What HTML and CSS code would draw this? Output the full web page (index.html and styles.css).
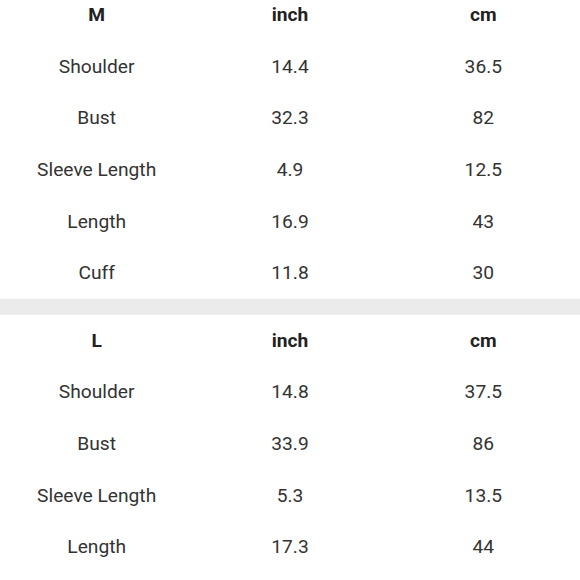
FILE: index.html
```html
<!DOCTYPE html>
<html>
<head>
<meta charset="utf-8">
<link rel="stylesheet" href="styles.css">
</head>
<body>
<div class="page">
  <table class="size-table">
    <tr class="head"><td>M</td><td>inch</td><td>cm</td></tr>
    <tr><td>Shoulder</td><td>14.4</td><td>36.5</td></tr>
    <tr><td>Bust</td><td>32.3</td><td>82</td></tr>
    <tr><td>Sleeve Length</td><td>4.9</td><td>12.5</td></tr>
    <tr><td>Length</td><td>16.9</td><td>43</td></tr>
    <tr><td>Cuff</td><td>11.8</td><td>30</td></tr>
  </table>
  <div class="divider"></div>
  <table class="size-table">
    <tr class="head"><td>L</td><td>inch</td><td>cm</td></tr>
    <tr><td>Shoulder</td><td>14.8</td><td>37.5</td></tr>
    <tr><td>Bust</td><td>33.9</td><td>86</td></tr>
    <tr><td>Sleeve Length</td><td>5.3</td><td>13.5</td></tr>
    <tr><td>Length</td><td>17.3</td><td>44</td></tr>
  </table>
</div>
</body>
</html>
```
FILE: styles.css
```css
html, body {
  margin: 0;
  padding: 0;
  background: #fff;
  overflow: hidden;
}
.page {
  width: 580px;
  margin-top: -10.6px;
  font-family: Roboto, "Noto Sans", sans-serif;
  color: #333;
}
.size-table {
  width: 100%;
  border-collapse: collapse;
  table-layout: fixed;
}
.size-table td {
  height: 51.6px;
  padding: 0;
  text-align: center;
  vertical-align: middle;
  font-size: 19.2px;
  line-height: 22px;
}
.head td {
  font-weight: 700;
  color: #222;
}
.divider {
  height: 16px;
  background: #ebebeb;
}
```
